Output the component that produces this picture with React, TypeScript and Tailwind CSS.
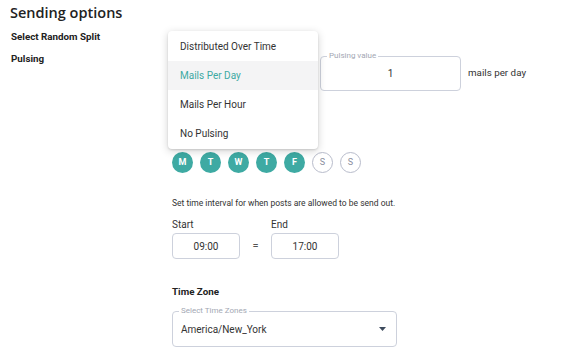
import React from "react";

const days = [
  { d: "M", on: true },
  { d: "T", on: true },
  { d: "W", on: true },
  { d: "T", on: true },
  { d: "F", on: true },
  { d: "S", on: false },
  { d: "S", on: false },
];

const pulsingOptions = ["Distributed Over Time", "Mails Per Day", "Mails Per Hour", "No Pulsing"];

function OutlinedField({
  label,
  className,
  children,
}: {
  label?: string;
  className?: string;
  children: React.ReactNode;
}) {
  return (
    <div className={`relative rounded-[4px] border border-[#cdd1dc] ${className ?? ""}`}>
      {label && (
        <span className="absolute left-[6px] top-[-6px] bg-white px-[2px] text-[8px] leading-[10px] text-[#a3a7b3]">
          {label}
        </span>
      )}
      {children}
    </div>
  );
}

export default function App() {
  return (
    <div className="relative w-[580px] h-[350px] overflow-hidden bg-white font-['Roboto',sans-serif] text-[#333]">
      {/* Header */}
      <h2 className="pl-[10px] pt-[3px] h-[26px] text-[14.5px] leading-[20px] font-semibold text-[#222] font-['Open_Sans',sans-serif]">
        Sending options
      </h2>

      <div className="flex">
        {/* Labels */}
        <div className="w-[162px] pl-[11px] shrink-0">
          <div className="mt-[1px] text-[9.8px] leading-[20px] font-bold text-[#222]">Select Random Split</div>
          <div className="mt-[2px] text-[9.8px] leading-[20px] font-bold text-[#222]">Pulsing</div>
        </div>

        {/* Fields */}
        <div className="relative flex-1 pl-[10px] pt-[30px]">
          <div className="flex items-center">
            <OutlinedField className="w-[138px] h-[35px]">
              <span />
            </OutlinedField>
            <OutlinedField label="Pulsing value" className="ml-[10px] w-[141px] h-[35px] flex items-center justify-center">
              <span className="text-[10px] text-[#333]">1</span>
            </OutlinedField>
            <span className="ml-[7px] text-[9.8px] text-[#333]">mails per day</span>
          </div>

          {/* Weekdays */}
          <div className="mt-[61px] flex gap-[7px]">
            {days.map((x, i) => (
              <div
                key={i}
                className={
                  x.on
                    ? "w-[21px] h-[21px] rounded-full bg-[#3eaaa3] text-white text-[9px] font-bold flex items-center justify-center"
                    : "w-[21px] h-[21px] rounded-full border border-[#b8bccb] text-[#8a8f9e] text-[9px] flex items-center justify-center"
                }
              >
                {x.d}
              </div>
            ))}
          </div>

          {/* Time interval */}
          <p className="mt-[23px] text-[8.5px] leading-[14px] text-[#333]">
            Set time interval for when posts are allowed to be send out.
          </p>
          <div className="mt-[8px] flex items-end">
            <div>
              <div className="text-[10px] leading-[14px]">Start</div>
              <OutlinedField className="mt-[1px] w-[68px] h-[26px] flex items-center justify-center">
                <span className="text-[10px]">09:00</span>
              </OutlinedField>
            </div>
            <div className="w-[31px] h-[26px] flex items-center justify-center text-[11px] text-[#555]">=</div>
            <div>
              <div className="text-[10px] leading-[14px]">End</div>
              <OutlinedField className="mt-[1px] w-[68px] h-[26px] flex items-center justify-center">
                <span className="text-[10px]">17:00</span>
              </OutlinedField>
            </div>
          </div>

          {/* Time zone */}
          <div className="mt-[25px] text-[9.8px] leading-[16px] font-bold text-[#222]">Time Zone</div>
          <OutlinedField label="Select Time Zones" className="mt-[11px] w-[225px] h-[36px] flex items-center justify-between pl-[8px] pr-[10px]">
            <span className="text-[10px] text-[#333]">America/New_York</span>
            <svg width="7" height="4" viewBox="0 0 7 4">
              <path d="M0 0 L7 0 L3.5 4 Z" fill="#3d4a5c" />
            </svg>
          </OutlinedField>

          {/* Open pulsing menu */}
          <div className="absolute left-[6px] top-[5px] w-[150px] rounded-[4px] bg-white py-[1px] shadow-[0_2px_8px_rgba(0,0,0,0.18),0_1px_2px_rgba(0,0,0,0.12)]">
            {pulsingOptions.map((o) => (
              <div
                key={o}
                className={
                  o === "Mails Per Day"
                    ? "h-[29px] flex items-center pl-[12px] bg-[#f4f4f5] text-[10px] text-[#3eaaa3]"
                    : "h-[29px] flex items-center pl-[12px] text-[10px] text-[#333]"
                }
              >
                {o}
              </div>
            ))}
          </div>
        </div>
      </div>
    </div>
  );
}
